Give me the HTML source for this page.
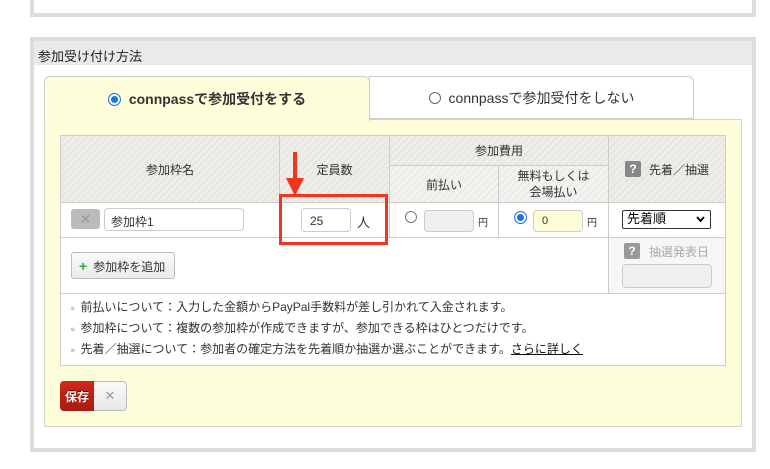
<!DOCTYPE html><html><head><meta charset="utf-8"><style>
*{box-sizing:border-box;margin:0;padding:0}
body{width:770px;height:469px;background:#fff;position:relative;overflow:hidden;font-family:"Liberation Sans","Noto Sans CJK JP",sans-serif;color:#333;font-size:12px}
.a{position:absolute}
.stripe{background:repeating-linear-gradient(135deg,#eeede8 0 3px,#e6e5df 3px 5px)}
.stripe2{background:repeating-linear-gradient(135deg,#f3f3f0 0 3px,#ebebe7 3px 5px)}
.c{display:flex;align-items:center;justify-content:center;text-align:center}
.inp{position:absolute;border:1px solid #ccc;border-radius:4px;background:#fff}
.rad{position:absolute;width:12px;height:12px;border-radius:50%;border:1px solid #777;background:#fff}
.radon{position:absolute;width:13px;height:13px;border-radius:50%;background:#1a73e8;box-shadow:inset 0 0 0 2px #fff;border:1px solid #1a73e8}
.q{position:absolute;width:16px;height:16px;background:#888;color:#fff;font-weight:bold;font-size:12px;border-radius:2px;display:flex;align-items:center;justify-content:center}
</style></head><body>
<div class="a" style="left:30px;top:-4px;width:726px;height:21px;border:4px solid #ddd;border-top:0"></div>
<div class="a" style="left:30px;top:37px;width:726px;height:415px;border:4px solid #ddd;background:#fff"></div>
<div class="a" style="left:34px;top:41px;width:718px;height:24px;background:#eaeaea;padding:5px 0 0 4px;font-size:13px;color:#222">参加受け付け方法</div>
<div class="a" style="left:44px;top:119px;width:698px;height:308px;background:#fefedb;border:1px solid #d4d4c4"></div>
<div class="a c" style="left:44px;top:76px;width:326px;height:45px;background:#fefedb;border:1px solid #ccc;border-bottom:0;border-radius:6px 6px 0 0;font-weight:bold;font-size:14px;color:#333">
<span style="display:inline-block;width:13px;height:13px;border-radius:50%;background:#1a73e8;box-shadow:inset 0 0 0 2px #fff;border:1px solid #1a73e8;margin-right:8px"></span>connpassで参加受付をする</div>
<div class="a c" style="left:369px;top:76px;width:325px;height:43px;background:#fff;border:1px solid #ccc;border-radius:0 6px 0 0;font-size:14px;color:#333">
<span style="display:inline-block;width:12px;height:12px;border-radius:50%;border:1px solid #666;margin-right:8px"></span>connpassで参加受付をしない</div>
<div class="a" style="left:60px;top:135px;width:666px;height:231px;background:#fff;border:1px solid #ccc"></div>
<div class="a stripe c" style="left:61px;top:136px;width:218px;height:66px">参加枠名</div>
<div class="a stripe c" style="left:280px;top:136px;width:109px;height:66px">定員数</div>
<div class="a stripe c" style="left:390px;top:136px;width:218px;height:29px">参加費用</div>
<div class="a stripe2 c" style="left:390px;top:166px;width:108px;height:36px">前払い</div>
<div class="a stripe2 c" style="left:499px;top:166px;width:109px;height:36px;line-height:16px">無料もしくは<br>会場払い</div>
<div class="a stripe c" style="left:609px;top:136px;width:116px;height:66px"><span class="q" style="position:relative;margin-right:8px">?</span>先着／抽選</div>
<div class="a" style="left:279px;top:136px;width:1px;height:101px;background:#ccc"></div>
<div class="a" style="left:389px;top:136px;width:1px;height:101px;background:#ccc"></div>
<div class="a" style="left:498px;top:165px;width:1px;height:72px;background:#ccc"></div>
<div class="a" style="left:608px;top:136px;width:1px;height:157px;background:#ccc"></div>
<div class="a" style="left:390px;top:165px;width:218px;height:1px;background:#ccc"></div>
<div class="a" style="left:61px;top:202px;width:664px;height:1px;background:#ccc"></div>
<div class="a" style="left:61px;top:237px;width:664px;height:1px;background:#ccc"></div>
<div class="a" style="left:61px;top:293px;width:664px;height:1px;background:#ccc"></div>
<div class="a" style="left:609px;top:238px;width:116px;height:55px;background:#f6f6f6"></div>
<div class="a c" style="left:71px;top:209px;width:29px;height:20px;background:#bbb;border-radius:3px;color:#999;font-size:14px">✕</div>
<div class="inp" style="left:104px;top:208px;width:140px;height:23px;padding:4px 6px;font-size:12px">参加枠1</div>
<div class="inp" style="left:301px;top:208px;width:50px;height:24px;padding:5px 8px;font-size:12px">25</div>
<div class="a" style="left:357px;top:212px;font-size:13px">人</div>
<div class="rad" style="left:405px;top:211px"></div>
<div class="inp" style="left:424px;top:210px;width:50px;height:22px;background:#f0f0f0"></div>
<div class="a" style="left:478px;top:214px;font-size:10px">円</div>
<div class="radon" style="left:514px;top:211px"></div>
<div class="inp" style="left:533px;top:210px;width:50px;height:22px;background:#fefed6;padding:4px 8px;font-size:11px">0</div>
<div class="a" style="left:587px;top:214px;font-size:10px">円</div>
<div class="a" style="left:622px;top:210px;width:89px;height:19px;border:1px solid #333;border-radius:2px;background:#fff;font-size:13px;line-height:16px;color:#000;padding:0 4px">先着順<svg style="position:absolute;right:5px;top:5px" width="9" height="7"><path d="M1 1 L4.5 5 L8 1" stroke="#000" stroke-width="1.8" fill="none"/></svg></div>
<div class="a" style="left:71px;top:252px;width:104px;height:27px;border:1px solid #bbb;border-radius:3px;background:linear-gradient(#fafafa,#eaeaea);font-size:12px;padding:5px 0 0 7px"><span style="color:#3a3;font-weight:bold;font-size:14px;margin-right:6px">+</span>参加枠を追加</div>
<div class="q" style="left:624px;top:243px;background:#999">?</div>
<div class="a" style="left:649px;top:243px;color:#aaa;font-size:12px">抽選発表日</div>
<div class="inp" style="left:622px;top:264px;width:90px;height:24px;background:#f0f0f0"></div>
<div class="a" style="left:70px;top:297px;font-size:12px;line-height:20px;color:#333;white-space:nowrap">
<div><span style="color:#ccc;margin-right:5px;font-size:9px">●</span>前払いについて：入力した金額からPayPal手数料が差し引かれて入金されます。</div>
<div><span style="color:#ccc;margin-right:5px;font-size:9px">●</span>参加枠について：複数の参加枠が作成できますが、参加できる枠はひとつだけです。</div>
<div><span style="color:#ccc;margin-right:5px;font-size:9px">●</span>先着／抽選について：参加者の確定方法を先着順か抽選か選ぶことができます。<span style="text-decoration:underline;color:#111">さらに詳しく</span></div>
</div>
<div class="a c" style="left:60px;top:381px;width:34px;height:30px;background:linear-gradient(#d0281a,#a81c10);border-radius:4px 0 0 4px;color:#fff;font-weight:bold;font-size:12px;text-shadow:0 -1px 0 #600">保存</div>
<div class="a c" style="left:94px;top:381px;width:33px;height:30px;background:linear-gradient(#fafafa,#e8e8e8);border:1px solid #bbb;border-left:0;border-radius:0 4px 4px 0;color:#999;font-size:13px">✕</div>
<div class="a" style="left:279px;top:194px;width:109px;height:51px;border:3px solid #f2351c"></div>
<div class="a" style="left:293px;top:152px;width:4px;height:30px;background:#f2351c"></div>
<svg class="a" style="left:286px;top:178px" width="18" height="19"><path d="M0 0 L18 0 L9 18 Z" fill="#f2351c"/></svg>
</body></html>
